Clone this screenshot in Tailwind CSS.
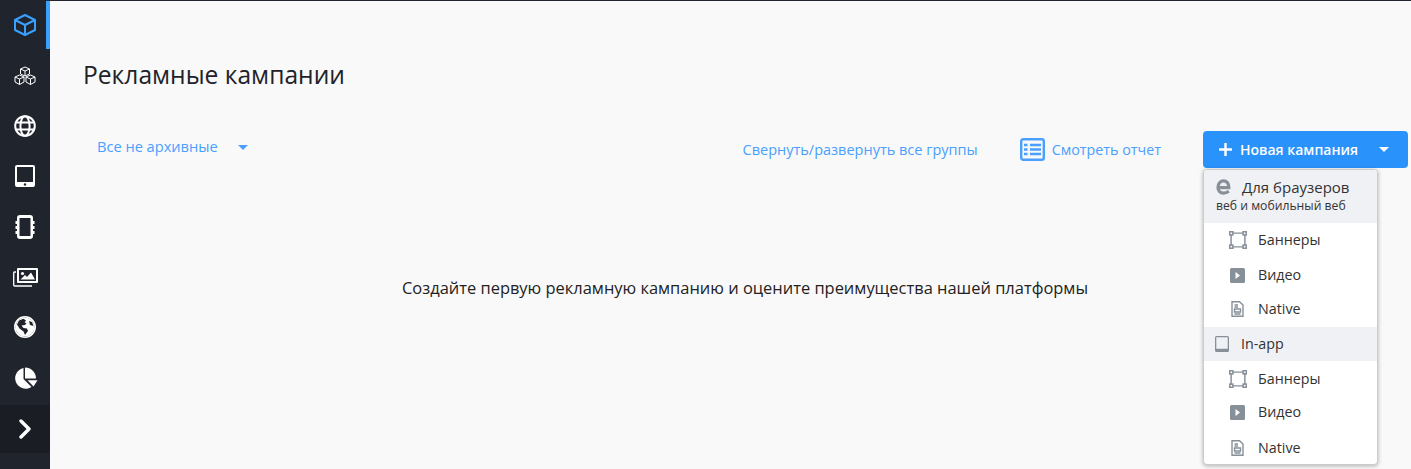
<!doctype html>
<html lang="ru"><head><meta charset="utf-8">
<script src="https://cdn.jsdelivr.net/npm/@tailwindcss/browser@4"></script>
</head>
<body class="m-0 overflow-hidden bg-[#f9f9f9]">
<div class="flex h-[469px] w-[1411px] border-t border-[#20242d] font-['Open_Sans','Noto_Sans',sans-serif] text-[#222]">
  <nav class="w-[50px] shrink-0 bg-[#20242d] flex flex-col text-white">
    <div class="h-[48px] shrink-0 flex items-center border-r-4 border-[#3aa0ff] pl-[13px] text-[#3aa0ff]">
      <svg width="24" height="24" viewBox="0 0 24 24" fill="none" stroke="currentColor" stroke-width="2" stroke-linejoin="round"><path d="M12 2 L22 7 V17 L12 22 L2 17 V7 Z M2 7 L12 12 L22 7 M12 12 V22"/></svg>
    </div>
    <div class="h-[53px] shrink-0 flex items-center justify-center">
      <svg width="24" height="20" viewBox="0 0 24 20" fill="none" stroke="currentColor" stroke-width="1" stroke-linejoin="round"><path d="M12 1 L16.5 3 V8 L12 10 L7.5 8 V3 Z M7.5 3 L12 5 L16.5 3 M12 5 V10"/><path d="M6.5 9 L11 11 V16 L6.5 18.5 L2 16 V11 Z M2 11 L6.5 13 L11 11 M6.5 13 V18.5"/><path d="M17.5 9 L22 11 V16 L17.5 18.5 L13 16 V11 Z M13 11 L17.5 13 L22 11 M17.5 13 V18.5"/></svg>
    </div>
    <div class="h-[47px] shrink-0 flex items-center justify-center">
      <svg width="22" height="22" viewBox="0 0 22 22" fill="none" stroke="currentColor" stroke-width="2"><circle cx="11" cy="11" r="9.8"/><ellipse cx="11" cy="11" rx="4.6" ry="9.8"/><path d="M1.5 7.5 H20.5 M1.5 14.5 H20.5"/></svg>
    </div>
    <div class="h-[53px] shrink-0 flex items-center justify-center">
      <svg width="20" height="22" viewBox="0 0 20 22"><path fill="currentColor" fill-rule="evenodd" d="M2 0 H18 A2 2 0 0 1 20 2 V20 A2 2 0 0 1 18 22 H2 A2 2 0 0 1 0 20 V2 A2 2 0 0 1 2 0 Z M2 2 V17 H18 V2 Z"/><circle cx="10" cy="19.5" r="1.2" fill="#20242d"/></svg>
    </div>
    <div class="h-[50px] shrink-0 flex items-center justify-center">
      <svg width="20" height="24" viewBox="0 0 20 24"><path fill="currentColor" fill-rule="evenodd" d="M5 0 H15 A3 3 0 0 1 18 3 V6 H19.5 V9 H18 V11 H19.5 V14 H18 V16 H19.5 V19 H18 V21 A3 3 0 0 1 15 24 H5 A3 3 0 0 1 2 21 V19 H.5 V16 H2 V14 H.5 V11 H2 V9 H.5 V6 H2 V3 A3 3 0 0 1 5 0 Z M4.5 3 V21 H15.5 V3 Z"/></svg>
    </div>
    <div class="h-[49px] shrink-0 flex items-center justify-center">
      <svg width="25" height="20" viewBox="0 0 25 20"><path fill="none" stroke="currentColor" stroke-width="1.3" d="M3 5 H1.5 A1 1 0 0 0 .7 6 V18 A1 1 0 0 0 1.7 19 H19"/><path fill="currentColor" fill-rule="evenodd" d="M5 1 H24 A1 1 0 0 1 25 2 V15 A1 1 0 0 1 24 16 H5 A1 1 0 0 1 4 15 V2 A1 1 0 0 1 5 1 Z M6 3 V14 H23 V3 Z"/><path fill="currentColor" d="M7.5 12.5 L12 8 L14 10 L18 5.5 L22 12.5 Z"/><circle cx="9.5" cy="6.5" r="1.6" fill="currentColor"/></svg>
    </div>
    <div class="h-[51px] shrink-0 flex items-center justify-center">
      <svg width="22" height="22" viewBox="0 0 22 22"><circle cx="11" cy="11" r="10.2" fill="none" stroke="currentColor" stroke-width="1.6"/><circle cx="11" cy="11" r="9.5" fill="currentColor"/><path fill="#20242d" d="M5 4.5 L9.5 2.8 L12 4.5 L10.5 6.5 L12.5 7 L11 9 L7.5 9.5 L9.5 12 L13 12.5 L14 15 L11 19 L9.5 15.5 L5.5 12.5 L3 8.5 Z M15 5 L18 6 L19.5 10 L16 9 Z"/></svg>
    </div>
    <div class="h-[53px] shrink-0 flex items-center justify-center">
      <svg width="25" height="23" viewBox="0 0 25 23"><path fill="currentColor" d="M10.5 1 A10.5 10.5 0 1 0 18.5 20 L10.5 12 Z M12 .5 A11 11 0 0 1 23 11.5 L12 11.5 Z M14.5 13.2 H24.5 L20.5 19.5 Z"/></svg>
    </div>
    <div class="h-[48px] shrink-0 bg-[#1a1d24] flex items-center justify-center">
      <svg width="14" height="20" viewBox="0 0 14 20" fill="none" stroke="currentColor" stroke-width="3.4" stroke-linecap="round" stroke-linejoin="round"><path d="M3 2 L11 10 L3 18"/></svg>
    </div>
  </nav>
  <main class="relative flex-1 pl-[33px] pr-[3px] pt-[57px]">
    <h1 class="text-[24.6px] leading-[34px] font-normal text-[#22222a]">Рекламные кампании</h1>
    <div class="mt-[39px] flex items-start text-[#4a9fff]">
      <div class="pl-[14px] flex items-center gap-[20px] h-[32px] text-[14.6px]">
        <span>Все не архивные</span>
        <span class="w-0 h-0 border-x-[5px] border-t-[5px] border-x-transparent border-t-[#4a9fff]"></span>
      </div>
      <div class="ml-auto flex items-center h-[37px] text-[14.5px]">
        <span>Свернуть/развернуть все группы</span>
        <svg class="ml-[42px]" width="25" height="23" viewBox="0 0 25 23" fill="none" stroke="#4a9fff" stroke-width="2.4"><rect x="1.2" y="1.2" width="22.6" height="20.6" rx="2"/><path d="M10 7 H21 M10 11.5 H21 M10 16 H21 M4 7 H7.5 M4 11.5 H7.5 M4 16 H7.5"/></svg>
        <span class="ml-[7px] text-[14.3px]">Смотреть отчет</span>
        <button class="ml-[42px] w-[205px] h-[37px] rounded-[4px] bg-[#2a92fb] text-white flex items-center pl-[16px] font-semibold text-[14px]">
          <svg width="13" height="13" viewBox="0 0 13 13" fill="none" stroke="#fff" stroke-width="2.4"><path d="M6.5 0 V13 M0 6.5 H13"/></svg>
          <span class="ml-[8px]">Новая кампания</span>
          <span class="ml-auto mr-[19px] w-0 h-0 border-x-[5px] border-t-[5px] border-x-transparent border-t-white"></span>
        </button>
      </div>
    </div>
    <p class="mt-[108px] ml-[319px] text-[16.45px] leading-[24px] text-[#222]">Создайте первую рекламную кампанию и оцените преимущества нашей платформы</p>

    <div class="absolute left-[1153px] top-[168px] w-[175px] h-[296px] bg-white rounded-[4px] border border-[#ccc] shadow-[0_1px_4px_rgba(0,0,0,0.3)] text-[14.3px] text-[#333] overflow-hidden">
      <div class="h-[53px] bg-[#f0f1f5] pl-[12px] pt-[6px]">
        <div class="flex items-center h-[22px]">
          <svg width="15" height="16" viewBox="0 0 14 15" fill="none" stroke="#878f99" stroke-width="3"><path d="M1.5 8 H12 C12 4 10 1.8 7 1.8 C4 1.8 1.8 4.5 1.8 8 C1.8 11 4 13.2 7 13.2 C9 13.2 10.5 12.6 12 11.5"/></svg>
          <span class="ml-[11px] text-[15px]">Для браузеров</span>
        </div>
        <div class="text-[12.2px] leading-[16px]">веб и мобильный веб</div>
      </div>
      <div class="h-[35px] pb-[2px] flex items-center pl-[25px]">
        <svg width="18" height="18" viewBox="0 0 17 17" fill="none" stroke="#878f99" stroke-width="1.4"><path d="M3 2 H14 M3 15 H14 M2 3 V14 M15 3 V14"/><rect x=".7" y=".7" width="3" height="3"/><rect x="13.3" y=".7" width="3" height="3"/><rect x=".7" y="13.3" width="3" height="3"/><rect x="13.3" y="13.3" width="3" height="3"/></svg>
        <span class="ml-[11px]">Баннеры</span>
      </div>
      <div class="h-[34px] flex items-center pl-[26px]">
        <svg width="15" height="15" viewBox="0 0 15 15"><rect width="15" height="15" rx="1.5" fill="#878f99"/><path d="M5.5 4 L10 7.5 L5.5 11 Z" fill="#fff"/></svg>
        <span class="ml-[13px]">Видео</span>
      </div>
      <div class="h-[35px] pb-[2px] flex items-center pl-[27px]">
        <svg width="13" height="16" viewBox="0 0 13 16" fill="none" stroke="#878f99" stroke-width="1.4"><path d="M1 .7 H8.5 L12 4 V15.3 H1 Z M3.5 4 H7 M3.5 6 H7 M3.5 8 H9.5 V11 H3.5 Z M3.5 13 H9.5"/></svg>
        <span class="ml-[14px]">Native</span>
      </div>
      <div class="h-[34px] bg-[#f0f1f5] flex items-center pl-[11px]">
        <svg width="14" height="16" viewBox="0 0 14 16"><path fill="#878f99" fill-rule="evenodd" d="M1.5 0 H12.5 A1.5 1.5 0 0 1 14 1.5 V14.5 A1.5 1.5 0 0 1 12.5 16 H1.5 A1.5 1.5 0 0 1 0 14.5 V1.5 A1.5 1.5 0 0 1 1.5 0 Z M1.3 1.3 V12.7 H12.7 V1.3 Z"/></svg>
        <span class="ml-[12px]">In-app</span>
      </div>
      <div class="h-[35px] flex items-center pl-[25px]">
        <svg width="18" height="18" viewBox="0 0 17 17" fill="none" stroke="#878f99" stroke-width="1.4"><path d="M3 2 H14 M3 15 H14 M2 3 V14 M15 3 V14"/><rect x=".7" y=".7" width="3" height="3"/><rect x="13.3" y=".7" width="3" height="3"/><rect x=".7" y="13.3" width="3" height="3"/><rect x="13.3" y="13.3" width="3" height="3"/></svg>
        <span class="ml-[11px]">Баннеры</span>
      </div>
      <div class="h-[34px] pb-[2px] flex items-center pl-[26px]">
        <svg width="15" height="15" viewBox="0 0 15 15"><rect width="15" height="15" rx="1.5" fill="#878f99"/><path d="M5.5 4 L10 7.5 L5.5 11 Z" fill="#fff"/></svg>
        <span class="ml-[13px]">Видео</span>
      </div>
      <div class="h-[35px] flex items-center pl-[27px]">
        <svg width="13" height="16" viewBox="0 0 13 16" fill="none" stroke="#878f99" stroke-width="1.4"><path d="M1 .7 H8.5 L12 4 V15.3 H1 Z M3.5 4 H7 M3.5 6 H7 M3.5 8 H9.5 V11 H3.5 Z M3.5 13 H9.5"/></svg>
        <span class="ml-[14px]">Native</span>
      </div>
    </div>
  </main>
</div>
</body></html>
